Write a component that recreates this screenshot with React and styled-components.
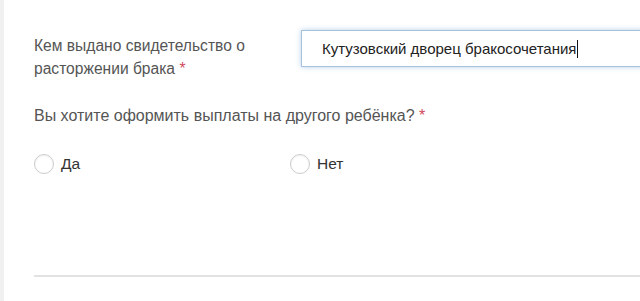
import React from "react"
import styled, { createGlobalStyle } from "styled-components"

const GlobalStyle = createGlobalStyle`
  html, body {
    margin: 0;
    padding: 0;
    background: #ffffff;
    overflow: hidden;
  }
  body {
    font-family: "Liberation Sans", Arial, sans-serif;
  }
`

const App = () => (
  <Page>
    <GlobalStyle />
    <Stripe />
    <Content>
      <FieldRow>
        <Label>
          Кем выдано свидетельство о расторжении брака <Required>*</Required>
        </Label>
        <TextInput>
          Кутузовский дворец бракосочетания
          <Caret />
        </TextInput>
      </FieldRow>
      <Question>
        Вы хотите оформить выплаты на другого ребёнка? <Required>*</Required>
      </Question>
      <RadioGroup>
        <RadioOption>
          <RadioCircle />
          Да
        </RadioOption>
        <RadioOption>
          <RadioCircle />
          Нет
        </RadioOption>
      </RadioGroup>
      <Divider />
    </Content>
  </Page>
)

const Page = styled.div`
  display: flex;
  width: 640px;
  height: 301px;
  overflow: hidden;
  background: #ffffff;
`

const Stripe = styled.div`
  width: 4px;
  flex-shrink: 0;
  background: #f0f0f0;
`

const Content = styled.div`
  flex: 1;
  padding: 30px 0 0 30px;
  display: flex;
  flex-direction: column;
`

const FieldRow = styled.div`
  display: grid;
  grid-template-columns: 267px 360px;
  align-items: start;
`

const Label = styled.div`
  font-size: 15.6px;
  line-height: 23px;
  color: #555555;
  padding-top: 4px;
  width: 232px;
`

const Required = styled.span`
  color: #d04a5c;
`

const TextInput = styled.div`
  height: 37px;
  box-sizing: border-box;
  border: 1px solid #a6c2dc;
  box-shadow: 0 0 5px rgba(120, 170, 220, 0.55);
  padding-left: 20px;
  display: flex;
  align-items: center;
  font-size: 15px;
  color: #222222;
  white-space: nowrap;
`

const Caret = styled.span`
  display: inline-block;
  width: 1px;
  height: 18px;
  background: #111111;
  margin-left: 1px;
`

const Question = styled.div`
  margin-top: 24px;
  font-size: 16px;
  line-height: 23px;
  color: #555555;
`

const RadioGroup = styled.div`
  display: grid;
  grid-template-columns: 256px 256px;
  margin-top: 27px;
`

const RadioOption = styled.label`
  display: flex;
  align-items: center;
  gap: 7px;
  font-size: 15.5px;
  color: #333333;
`

const RadioCircle = styled.span`
  width: 18px;
  height: 18px;
  border-radius: 50%;
  border: 1px solid #cccccc;
  background: #ffffff;
  box-shadow: inset 0 1px 2px rgba(0, 0, 0, 0.06);
`

const Divider = styled.div`
  margin-top: 101px;
  height: 2px;
  background: #e2e2e2;
`

export default App
